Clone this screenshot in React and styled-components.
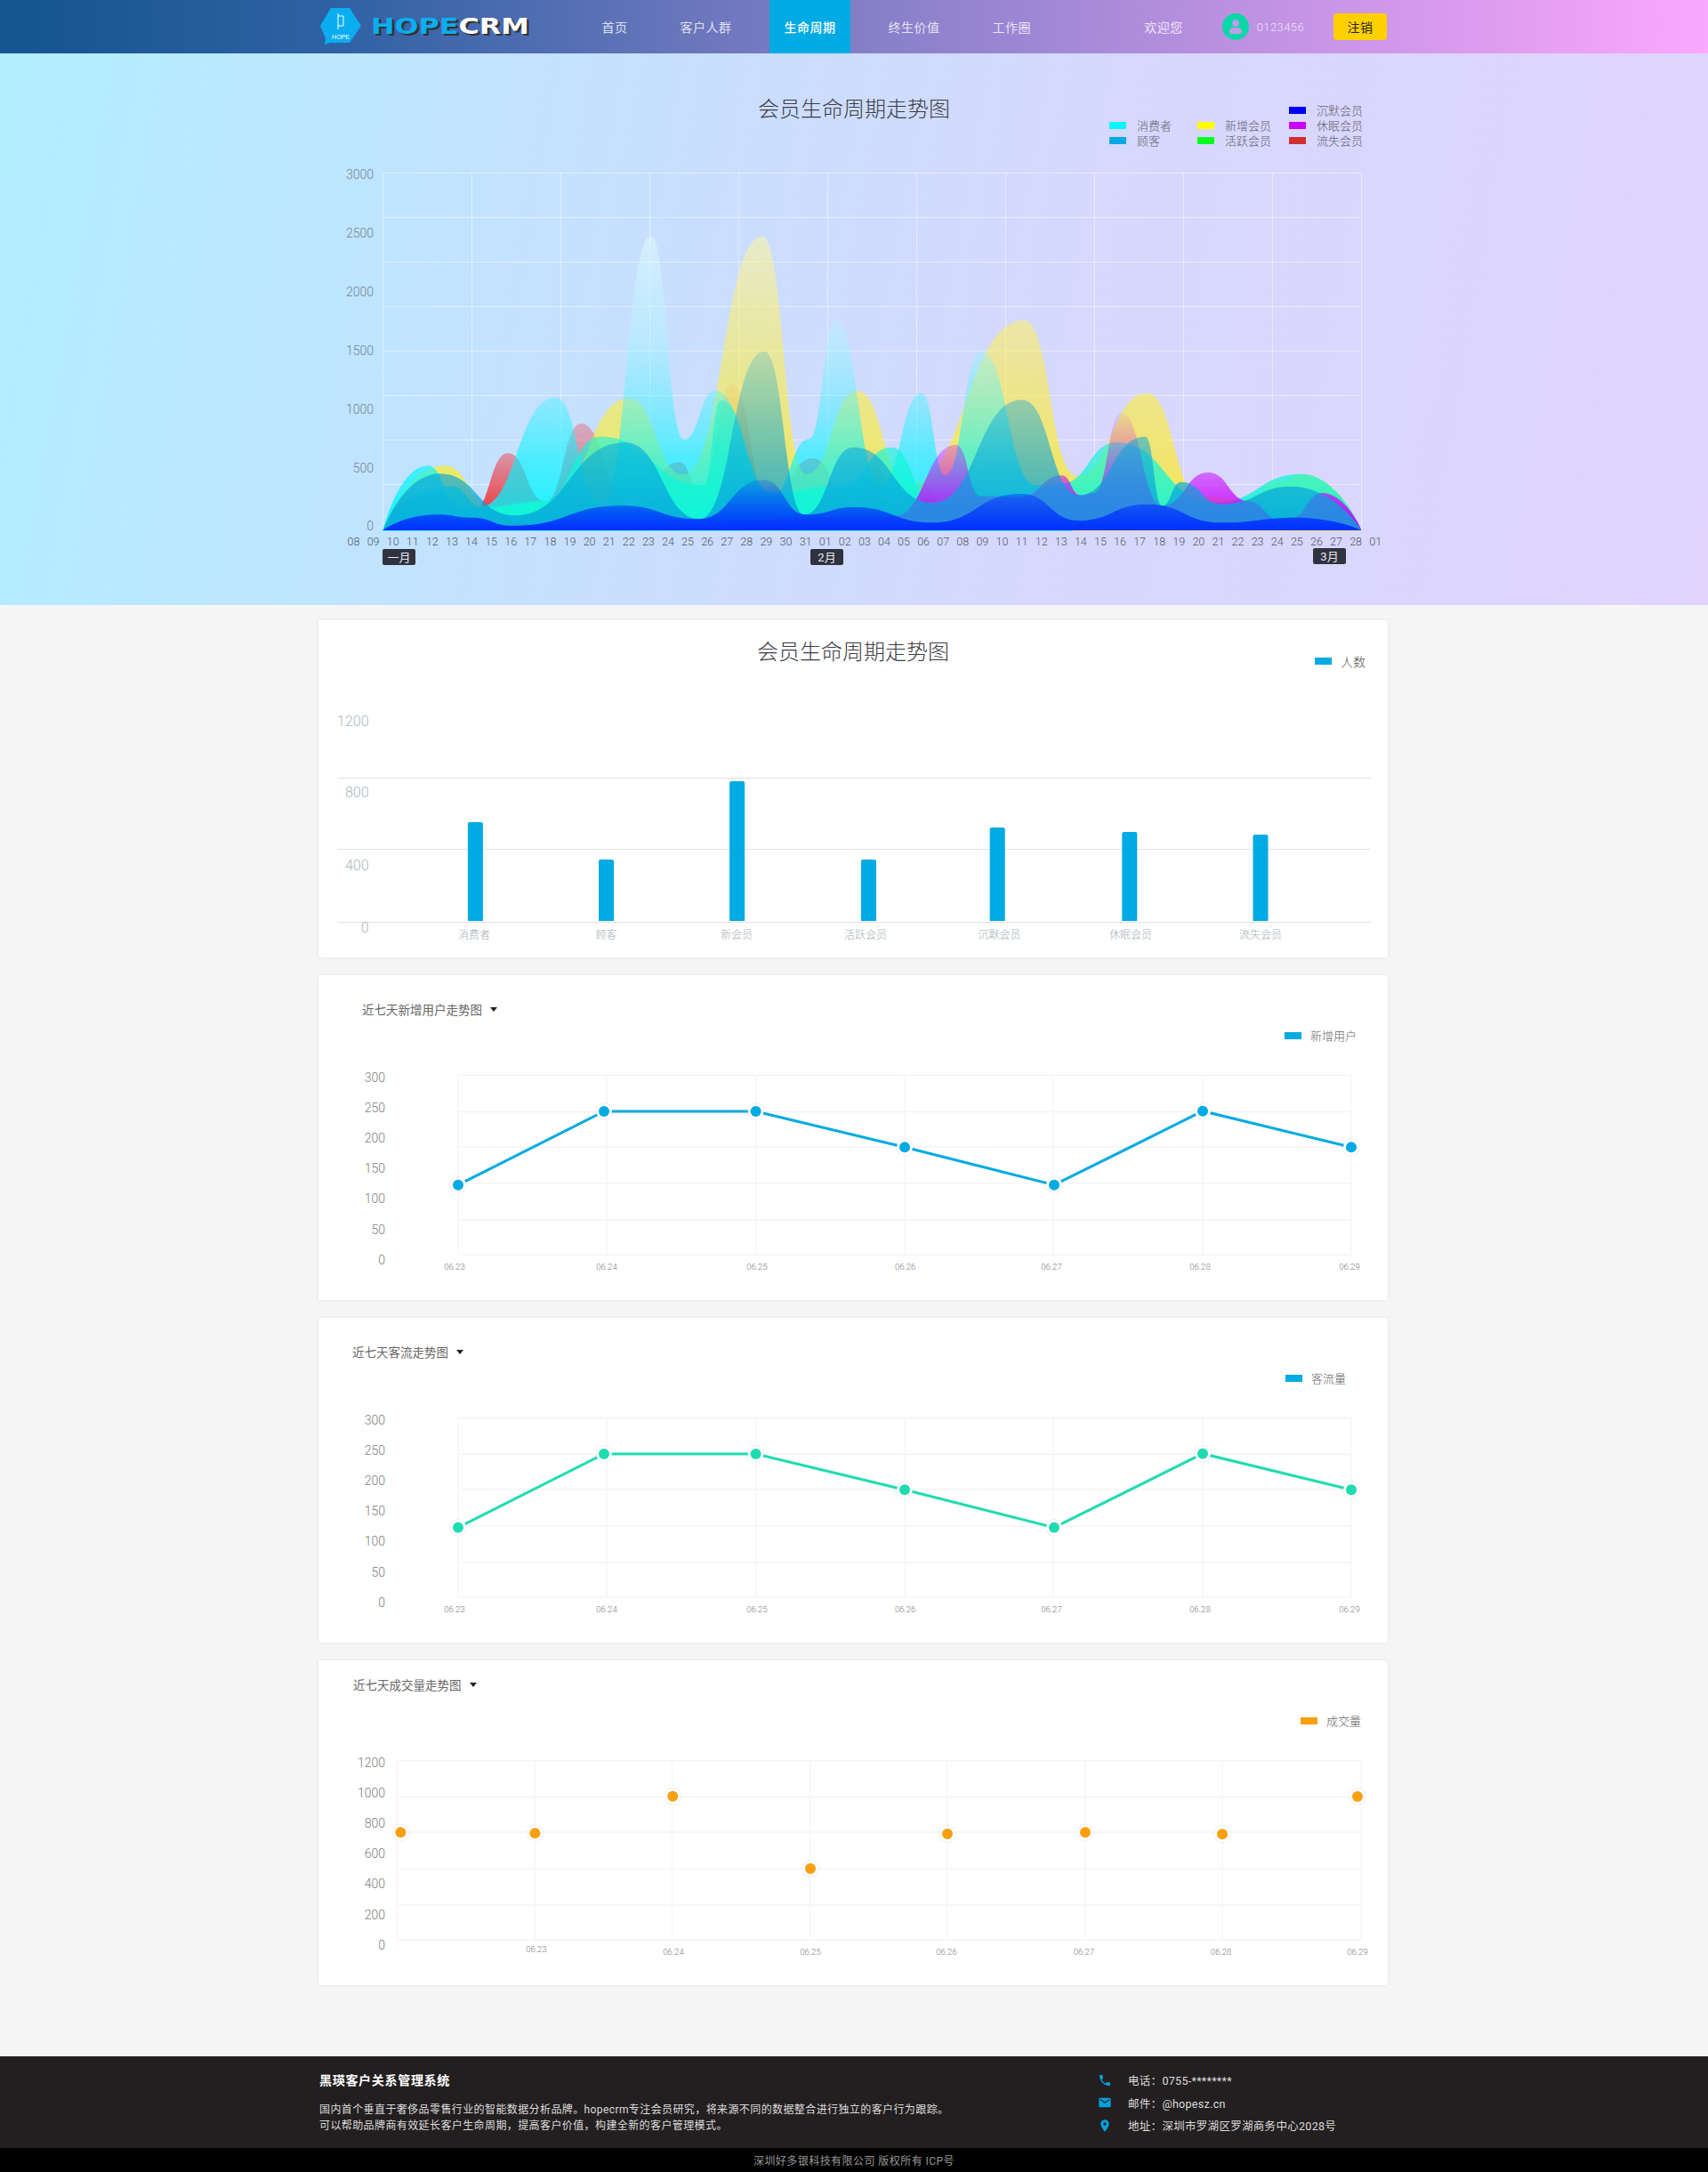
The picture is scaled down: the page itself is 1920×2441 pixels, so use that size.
import React from 'react';
import styled, { createGlobalStyle } from 'styled-components';
import { FaUser } from 'react-icons/fa';
import { MdPhone, MdEmail, MdLocationOn } from 'react-icons/md';

const sans = `Roboto, "Noto Sans CJK SC", "Liberation Sans", sans-serif`;

const GlobalStyle = createGlobalStyle`
  html, body { margin: 0; padding: 0; background: #f5f5f5; }
  body { font-family: ${sans}; }
  * { box-sizing: border-box; }
`;

const Header = styled.header`
  height: 60px;
  background: linear-gradient(90deg, #14548f 0%, #2f62a4 20%, #7c7cc4 47%, #b78fe0 70%, #e09df0 88%, #fba8ff 100%);
`;

const HeaderInner = styled.div`
  width: 1202px;
  height: 60px;
  margin-left: 358px;
  display: flex;
  align-items: center;
`;

const LogoBox = styled.div`
  width: 302px;
  padding-left: 2px;
  display: flex;
  align-items: center;
  gap: 11px;
`;

const LogoText = styled.div`
  font: 700 25px "DejaVu Sans", sans-serif;
  line-height: 30px;
  transform: scaleX(1.27);
  transform-origin: left center;
  color: #fff;
  text-shadow: 2px 2px 0 #333;
  span { color: #0aaef0; }
`;

const Nav = styled.nav`
  display: flex;
  gap: 26px;
  height: 60px;
`;

const NavItem = styled.a`
  height: 60px;
  padding: 0 16.5px;
  display: flex;
  align-items: center;
  font-size: 14px;
  letter-spacing: 0.5px;
  color: ${(p) => (p.$active ? '#fff' : 'rgba(255,255,255,0.8)')};
  font-weight: ${(p) => (p.$active ? 500 : 400)};
  background: ${(p) => (p.$active ? '#00aae3' : 'transparent')};
`;

const UserArea = styled.div`
  margin-left: auto;
  padding-right: 1px;
  display: flex;
  align-items: center;
`;

const Welcome = styled.span`
  font-size: 14px;
  letter-spacing: 0.5px;
  color: rgba(255, 255, 255, 0.8);
  margin-right: 44px;
`;

const Avatar = styled.div`
  width: 30px;
  height: 30px;
  border-radius: 50%;
  background: #08d8a8;
  color: #c39ce8;
  font-size: 16px;
  display: flex;
  align-items: center;
  justify-content: center;
`;

const UserId = styled.span`
  font-size: 13px;
  font-weight: 300;
  color: rgba(255, 255, 255, 0.75);
  margin: 0 33px 0 9px;
  letter-spacing: 0.4px;
`;

const LogoutButton = styled.button`
  width: 60px;
  height: 30px;
  border: 0;
  border-radius: 4px;
  background: #ffd000;
  color: #222;
  font: 400 14px ${sans};
  letter-spacing: 0.5px;
`;

const Hero = styled.section`
  height: 620px;
  background: linear-gradient(100deg, #b2eeff 0%, #c6e0ff 35%, #d6d8fe 62%, #e0d4fd 100%);
`;

const HeroHead = styled.div`
  width: 1240px;
  height: 120px;
  margin: 0 auto;
  padding-top: 48px;
  display: grid;
  grid-template-columns: 1fr auto 1fr;
  align-items: start;
`;

const ChartTitle = styled.h2`
  grid-column: 2;
  margin: 0;
  font-size: 24px;
  line-height: 30px;
  font-weight: 300;
  color: #3c3c44;
  text-align: center;
`;

const HeroLegend = styled.div`
  grid-column: 3;
  justify-self: end;
  margin: 7px 48px 0 0;
  display: grid;
  grid-template-columns: 99px 103px auto;
  align-items: end;
`;

const LegendColumn = styled.div`
  display: flex;
  flex-direction: column;
`;

const LegendItem = styled.div`
  height: 17px;
  display: flex;
  align-items: center;
  gap: ${(p) => p.$gap || 12}px;
  font-size: ${(p) => p.$size || 13}px;
  font-weight: 300;
  color: ${(p) => p.$text || '#5c6068'};
`;

const Swatch = styled.i`
  width: 19px;
  height: 8px;
  background: ${(p) => p.$color};
`;

const HeroChart = styled.svg`
  display: block;
  width: 1240px;
  height: 480px;
  margin: 0 auto;
`;

const Cards = styled.main`
  width: 1202px;
  margin-left: 358px;
  padding: 17px 0 80px;
  display: grid;
  row-gap: 20px;
`;

const Card = styled.section`
  height: ${(p) => p.$height}px;
  background: #fff;
  border-radius: 3px;
  box-shadow: 0 0 4px rgba(0, 0, 0, 0.07);
`;

const BarHead = styled.div`
  height: 90px;
  padding-top: 21px;
  display: grid;
  grid-template-columns: 1fr auto 1fr;
  align-items: start;
`;

const BarLegend = styled.div`
  grid-column: 3;
  justify-self: end;
  margin: 16px 25px 0 0;
`;

const TrendHead = styled.div`
  height: 90px;
  padding: ${(p) => p.$top}px ${(p) => p.$right}px 14px ${(p) => p.$left}px;
  display: flex;
  flex-direction: column;
  justify-content: space-between;
`;

const TrendTitle = styled.div`
  height: 20px;
  display: flex;
  align-items: center;
  font-size: 13.5px;
  color: #666;
`;

const Caret = styled.i`
  width: 0;
  height: 0;
  margin-left: 9px;
  border-style: solid;
  border-width: 5px 4px 0;
  border-color: #222 transparent transparent;
`;

const TrendLegend = styled.div`
  align-self: flex-end;
`;

const Chart = styled.svg`
  display: block;
  width: 1202px;
  height: ${(p) => p.$height}px;
`;

const ChartText = styled.text`
  font-family: ${sans};
  font-size: ${(p) => p.$size}px;
  font-weight: 300;
  fill: ${(p) => p.$color};
  text-anchor: ${(p) => p.$anchor || 'middle'};
  dominant-baseline: central;
`;

const MonthText = styled.text`
  font-family: ${sans};
  font-size: 13px;
  fill: #e8e8ee;
  text-anchor: middle;
  dominant-baseline: central;
`;

const Footer = styled.footer`
  height: 103px;
  background: #231f20;
`;

const FooterInner = styled.div`
  width: 1202px;
  margin-left: 358px;
  display: flex;
  justify-content: space-between;
`;

const FooterAbout = styled.div`
  padding: 17px 0 0 1px;
`;

const FooterTitle = styled.h4`
  margin: 0 0 14px;
  font-size: 14px;
  line-height: 20px;
  font-weight: 700;
  letter-spacing: 0.7px;
  color: #fff;
`;

const FooterText = styled.p`
  margin: 0;
  font-size: 12px;
  line-height: 18px;
  letter-spacing: 0.4px;
  color: #ddd;
`;

const ContactList = styled.div`
  width: 326px;
  padding-top: 14px;
`;

const ContactRow = styled.div`
  height: 25.5px;
  display: flex;
  align-items: center;
  gap: 18px;
  font-size: 12.5px;
  letter-spacing: 0.3px;
  color: #ddd;
  svg { color: #00a0dc; font-size: 16px; flex: none; }
`;

const Copyright = styled.div`
  height: 27px;
  background: #000;
  color: #999;
  font-size: 12px;
  letter-spacing: 0.45px;
  display: flex;
  align-items: center;
  justify-content: center;
`;

// curve with flat tangents at every sample, so each sample reads as a crest or a trough
const areaPath = (pts) => {
  let d = `M${pts[0][0]},${pts[0][1]}`;
  for (let i = 1; i < pts.length; i++) {
    const [x0, y0] = pts[i - 1];
    const [x1, y1] = pts[i];
    const dx = x1 - x0;
    if (i === 1) d += `C${x0 + dx * 0.2},${y0 + (y1 - y0) * 0.5} ${x1 - dx * 0.45},${y1} ${x1},${y1}`;
    else if (i === pts.length - 1) d += `C${x0 + dx * 0.45},${y0} ${x1 - dx * 0.15},${y1 - (y1 - y0) * 0.4} ${x1},${y1}`;
    else d += `C${x0 + dx * 0.5},${y0} ${x1 - dx * 0.5},${y1} ${x1},${y1}`;
  }
  return `${d}Z`;
};

// drawn in this order: red sits under the rest, which is why it only shows at its left crest
const areaSeries = [
  {
    id: 'red', stops: [[0, 0.1, '#f81818'], [0.5, 0.4, '#f81818'], [1, 0.95, '#f81818']],
    pts: [[158, 1248], [265, 1127], [420, 1185], [525, 988], [635, 1150], [740, 888], [880, 1165], [1030, 1018], [1090, 1117], [1185, 755], [1290, 1140], [1420, 1005], [1540, 1170], [1610, 1040], [1662, 1190], [1740, 1092], [1832, 1220], [2300, 1200], [3032, 1248]],
  },
  {
    id: 'yellow', stops: [[0, 0.55, '#fff6a0'], [0.45, 0.55, '#ffee40'], [1, 0.7, '#ffee00']],
    pts: [[158, 1248], [340, 1030], [480, 1175], [640, 1150], [880, 803], [1040, 1060], [1272, 257], [1400, 1060], [1552, 778], [1700, 1090], [2042, 540], [2195, 1065], [2402, 785], [2560, 1135], [2690, 1145], [2790, 1085], [2860, 1060], [3032, 1248]],
  },
  {
    id: 'cyan', stops: [[0, 0.5, '#e8fbff'], [0.35, 0.4, '#a8f8ff'], [0.55, 0.42, '#40f4ff'], [0.75, 0.6, '#00f4ff'], [1, 0.9, '#00f4ff']],
    pts: [[158, 1248], [290, 1030], [385, 1175], [440, 1170], [665, 800], [800, 1165], [945, 255], [1042, 942], [1135, 777], [1300, 1130], [1410, 940], [1488, 540], [1620, 1090], [1740, 785], [1810, 1062], [1914, 645], [2075, 1095], [2300, 1150], [2600, 1180], [3032, 1248]],
  },
  {
    id: 'green', stops: [[0, 0.45, '#10f6d8'], [1, 0.95, '#10f6d8']],
    pts: [[158, 1248], [360, 1100], [450, 1170], [630, 1150], [795, 932], [1100, 1095], [1150, 810], [1300, 1120], [1500, 1100], [1652, 968], [1774, 1155], [1914, 1130], [2035, 1130], [2150, 1090], [2312, 952], [2600, 1155], [2857, 1058], [3032, 1248]],
  },
  {
    id: 'purple', stops: [[0, 0.06, '#c800ff'], [0.5, 0.5, '#c800ff'], [1, 1, '#c800ff']],
    pts: [[158, 1248], [900, 1225], [1660, 1200], [1842, 960], [1912, 1133], [2030, 1135], [2152, 1063], [2207, 1130], [2247, 1122], [2327, 852], [2447, 1165], [2582, 1053], [2702, 1150], [2790, 1210], [2827, 1205], [2917, 1122], [3032, 1248]],
  },
  {
    id: 'sky', stops: [[0, 0.2, '#07a4dc'], [1, 0.85, '#07a4dc']],
    pts: [[158, 1248], [325, 1057], [545, 1198], [870, 952], [1088, 1210], [1278, 645], [1395, 1195], [1540, 968], [1772, 1155], [2035, 808], [2202, 1130], [2397, 932], [2447, 1165], [2502, 1085], [2622, 1160], [2827, 1100], [3032, 1248]],
  },
  {
    id: 'blue', stops: [[0, 0.2, '#0030ff'], [1, 1, '#0030ff']],
    pts: [[158, 1248], [320, 1195], [420, 1205], [540, 1233], [860, 1165], [1085, 1210], [1275, 1078], [1400, 1195], [1542, 1170], [1772, 1222], [2032, 1125], [2202, 1215], [2402, 1160], [2622, 1222], [2842, 1205], [3032, 1248]],
  },
];

const pad = (n) => String(n).padStart(2, '0');
const dayLabels = [
  ...Array.from({ length: 24 }, (_, i) => pad(i + 8)),
  ...Array.from({ length: 28 }, (_, i) => pad(i + 1)),
  '01',
];

const heroYLabels = [
  ['3000', 196], ['2500', 262], ['2000', 328], ['1500', 394], ['1000', 460], ['500', 526], ['0', 591],
];

const monthBadges = [
  ['一月', 430, 617], ['2月', 911, 617], ['3月', 1476, 616],
];

const LifecycleChart = () => (
  <HeroChart viewBox="340 180 1240 480">
    <defs>
      {areaSeries.map((s) => (
        <linearGradient key={s.id} id={`area-${s.id}`} x1="0" y1="0" x2="0" y2="1">
          {s.stops.map(([offset, alpha, color]) => (
            <stop key={offset} offset={offset} stopColor={color} stopOpacity={alpha} />
          ))}
        </linearGradient>
      ))}
    </defs>
    {[194.5, 244.5, 294.5, 344.5, 394.5, 444.5, 494.5, 544.5].map((y) => (
      <line key={y} x1="430" x2="1530" y1={y} y2={y} stroke="rgba(255,255,255,0.45)" />
    ))}
    {[430.5, 530.5, 630.5, 730.5, 830.5, 930.5, 1030.5, 1130.5, 1230.5, 1330.5, 1430.5, 1530.5].map((x) => (
      <line key={x} x1={x} x2={x} y1="194" y2="596" stroke="rgba(255,255,255,0.45)" />
    ))}
    <g transform="translate(370 180) scale(0.3827 0.33333)">
      {areaSeries.map((s) => (
        <path key={s.id} d={areaPath(s.pts)} fill={`url(#area-${s.id})`} />
      ))}
    </g>
    <line x1="430" x2="1206" y1="596.5" y2="596.5" stroke="#4fe6ff" />
    <line x1="1206" x2="1530" y1="596.5" y2="596.5" stroke="#efdc78" />
    {heroYLabels.map(([text, y]) => (
      <ChartText key={text} x="420" y={y} $size={14} $color="#76828e" $anchor="end">{text}</ChartText>
    ))}
    {dayLabels.map((text, i) => (
      <ChartText key={i} x={397.5 + i * 22.09} y="608" $size={12.5} $color="#505862">{text}</ChartText>
    ))}
    {monthBadges.map(([text, x, y]) => (
      <g key={text}>
        <rect x={x} y={y} width="37" height="18" rx="2" fill="#2f3340" />
        <MonthText x={x + 18.5} y={y + 9}>{text}</MonthText>
      </g>
    ))}
  </HeroChart>
);

const barGrid = [87, 167, 249];
const barLabels = [['1200', 23], ['800', 103], ['400', 185], ['0', 255]];
const bars = [
  ['消费者', 176.4, 137, 175],
  ['顾客', 323.5, 179, 323.5],
  ['新会员', 470.6, 91, 470],
  ['活跃会员', 618.5, 179, 615],
  ['沉默会员', 763.2, 143, 765.5],
  ['休眠会员', 911.8, 148, 913],
  ['流失会员', 1059, 151, 1059],
];

const MemberBars = () => (
  <Chart $height={289} viewBox="0 0 1202 289">
    {barGrid.map((y) => (
      <line key={y} x1="21.6" x2="1182.6" y1={y + 0.5} y2={y + 0.5} stroke="#e2e2e2" />
    ))}
    {barLabels.map(([text, y]) => (
      <ChartText key={text} x="56.6" y={y} $size={16} $color="#aab6bf" $anchor="end">{text}</ChartText>
    ))}
    {bars.map(([name, x, top, labelX]) => (
      <g key={name}>
        <path d={`M${x - 8.5},248V${top + 2}Q${x - 8.5},${top} ${x - 6.5},${top}H${x + 6.5}Q${x + 8.5},${top} ${x + 8.5},${top + 2}V248Z`} fill="#00aae3" />
        <ChartText x={labelX} y="264" $size={12} $color="#a3afb8">{name}</ChartText>
      </g>
    ))}
  </Chart>
);

const trendGridY = [22.5, 63.5, 103, 144, 185, 224];
const trendLabelY = [24.7, 59, 93, 127, 161.3, 195.7, 229.7];
const dates = ['06.23', '06.24', '06.25', '06.26', '06.27', '06.28', '06.29'];

const TrendChart = ({ color, showLine, grid, yLabels, labelPos, points }) => (
  <Chart $height={275} viewBox="0 0 1202 275">
    {trendGridY.map((y) => (
      <line key={y} x1={grid[0]} x2={grid[grid.length - 1]} y1={y} y2={y} stroke="#f4f4f4" strokeWidth="1.5" />
    ))}
    {grid.map((x) => (
      <line key={x} x1={x} x2={x} y1="22" y2="224" stroke="#f3f3f3" />
    ))}
    {yLabels.map((text, i) => (
      <ChartText key={text} x="75" y={trendLabelY[i]} $size={14} $color="#7d7d7d" $anchor="end">{text}</ChartText>
    ))}
    {labelPos.map(([x, y], i) => (
      <ChartText key={dates[i]} x={x} y={y} $size={9.5} $color="#7d7d7d">{dates[i]}</ChartText>
    ))}
    {showLine && (
      <polyline points={points.map((p) => p.join(',')).join(' ')} fill="none" stroke={color} strokeWidth="3" />
    )}
    {points.map(([x, y]) => (
      <g key={x}>
        <circle cx={x} cy={y} r="10" fill="rgba(0,0,0,0.06)" />
        <circle cx={x} cy={y} r="9" fill="#fff" />
        <circle cx={x} cy={y} r="6" fill={color} />
      </g>
    ))}
  </Chart>
);

const countLabels = ['300', '250', '200', '150', '100', '50', '0'];
const amountLabels = ['1200', '1000', '800', '600', '400', '200', '0'];
const weekGrid = [157, 324, 491.6, 659, 826, 994, 1161];
const weekLabels = [[153, 237], [324, 237], [493, 237], [659.7, 237], [824, 237], [991, 237], [1159, 237]];
const weekPoints = [[157, 145.7], [321, 63], [491.6, 63], [659, 103.3], [827, 145.7], [994, 62.7], [1161, 103.3]];

const dealGrid = [88.5, 243.4, 397.4, 552.3, 707, 862, 1016, 1172];
const dealLabels = [[245, 234], [399, 237], [553, 237], [706, 237], [860.5, 237], [1014.6, 237], [1168, 237]];
const dealPoints = [[92.4, 103.3], [243.4, 104.3], [398.2, 62.7], [553, 144], [707, 105], [862, 103.3], [1016, 105.3], [1168, 63]];

const App = () => (
  <>
    <GlobalStyle />
    <Header>
      <HeaderInner>
        <LogoBox>
          <svg width="46" height="42" viewBox="0 0 46 42">
            <path d="M12 0H33L46 20L33 39H11L5 41L6 34L0 20Z" fill="#0aaef0" />
            <path d="M20 6V24M20 9H26V20H20" fill="none" stroke="#fff" strokeWidth="1" />
            <text x="23" y="35" fontSize="7" fill="#fff" textAnchor="middle" fontFamily="Liberation Sans, sans-serif">HOPE</text>
          </svg>
          <LogoText><span>HOPE</span>CRM</LogoText>
        </LogoBox>
        <Nav>
          <NavItem>首页</NavItem>
          <NavItem>客户人群</NavItem>
          <NavItem $active>生命周期</NavItem>
          <NavItem>终生价值</NavItem>
          <NavItem>工作圈</NavItem>
        </Nav>
        <UserArea>
          <Welcome>欢迎您</Welcome>
          <Avatar><FaUser /></Avatar>
          <UserId>0123456</UserId>
          <LogoutButton>注销</LogoutButton>
        </UserArea>
      </HeaderInner>
    </Header>

    <Hero>
      <HeroHead>
        <ChartTitle>会员生命周期走势图</ChartTitle>
        <HeroLegend>
          <LegendColumn>
            <LegendItem><Swatch $color="#00f8ff" />消费者</LegendItem>
            <LegendItem><Swatch $color="#00aae3" />顾客</LegendItem>
          </LegendColumn>
          <LegendColumn>
            <LegendItem><Swatch $color="#ffff00" />新增会员</LegendItem>
            <LegendItem><Swatch $color="#00ff20" />活跃会员</LegendItem>
          </LegendColumn>
          <LegendColumn>
            <LegendItem><Swatch $color="#0000ff" />沉默会员</LegendItem>
            <LegendItem><Swatch $color="#c800ff" />休眠会员</LegendItem>
            <LegendItem><Swatch $color="#d03030" />流失会员</LegendItem>
          </LegendColumn>
        </HeroLegend>
      </HeroHead>
      <LifecycleChart />
    </Hero>

    <Cards>
      <Card $height={379}>
        <BarHead>
          <ChartTitle>会员生命周期走势图</ChartTitle>
          <BarLegend>
            <LegendItem $gap={10} $size={14} $text="#555"><Swatch $color="#00aae3" />人数</LegendItem>
          </BarLegend>
        </BarHead>
        <MemberBars />
      </Card>

      <Card $height={365}>
        <TrendHead $top={28} $left={49} $right={35}>
          <TrendTitle>近七天新增用户走势图<Caret /></TrendTitle>
          <TrendLegend><LegendItem $gap={10} $text="#666"><Swatch $color="#00aae3" />新增用户</LegendItem></TrendLegend>
        </TrendHead>
        <TrendChart color="#00aae3" showLine grid={weekGrid} yLabels={countLabels} labelPos={weekLabels} points={weekPoints} />
      </Card>

      <Card $height={365}>
        <TrendHead $top={28} $left={38} $right={47}>
          <TrendTitle>近七天客流走势图<Caret /></TrendTitle>
          <TrendLegend><LegendItem $gap={10} $text="#666"><Swatch $color="#00aae3" />客流量</LegendItem></TrendLegend>
        </TrendHead>
        <TrendChart color="#1fdcb0" showLine grid={weekGrid} yLabels={countLabels} labelPos={weekLabels} points={weekPoints} />
      </Card>

      <Card $height={365}>
        <TrendHead $top={17} $left={39} $right={30}>
          <TrendTitle>近七天成交量走势图<Caret /></TrendTitle>
          <TrendLegend><LegendItem $gap={10} $text="#666"><Swatch $color="#f99f10" />成交量</LegendItem></TrendLegend>
        </TrendHead>
        <TrendChart color="#f99f10" grid={dealGrid} yLabels={amountLabels} labelPos={dealLabels} points={dealPoints} />
      </Card>
    </Cards>

    <Footer>
      <FooterInner>
        <FooterAbout>
          <FooterTitle>黑瑛客户关系管理系统</FooterTitle>
          <FooterText>
            国内首个垂直于奢侈品零售行业的智能数据分析品牌。hopecrm专注会员研究，将来源不同的数据整合进行独立的客户行为跟踪。
            <br />
            可以帮助品牌商有效延长客户生命周期，提高客户价值，构建全新的客户管理模式。
          </FooterText>
        </FooterAbout>
        <ContactList>
          <ContactRow><MdPhone />电话：0755-********</ContactRow>
          <ContactRow><MdEmail />邮件：@hopesz.cn</ContactRow>
          <ContactRow><MdLocationOn />地址：深圳市罗湖区罗湖商务中心2028号</ContactRow>
        </ContactList>
      </FooterInner>
    </Footer>
    <Copyright>深圳好多银科技有限公司 版权所有 ICP号</Copyright>
  </>
);

export default App;
